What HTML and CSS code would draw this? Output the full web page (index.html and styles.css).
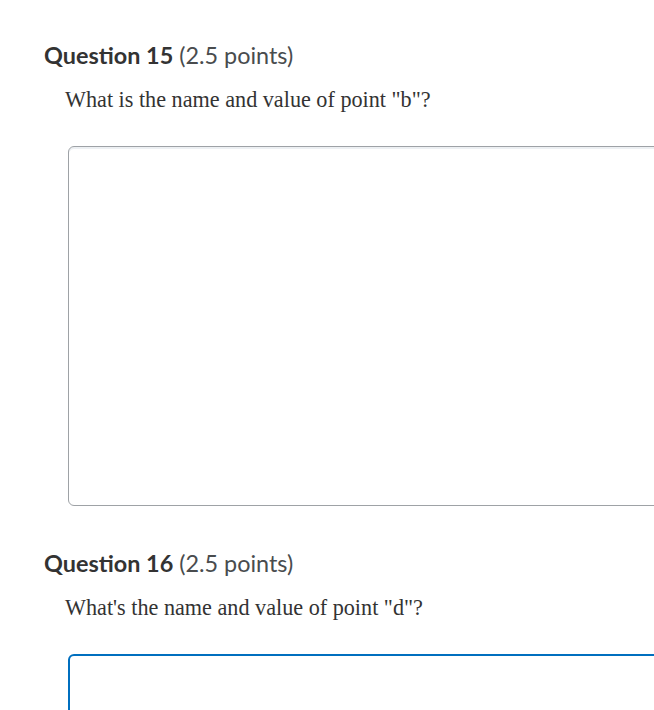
FILE: index.html
```html
<!DOCTYPE html>
<html>
<head>
<meta charset="utf-8">
<link rel="stylesheet" href="styles.css">
</head>
<body>
<div class="page">
  <section class="question">
    <h2 class="q-title"><strong>Question 15</strong> (2.5 points)</h2>
    <div class="q-body">
      <p class="q-text">What is the name and value of point "b"?</p>
      <div class="answer"></div>
    </div>
  </section>
  <section class="question">
    <h2 class="q-title"><strong>Question 16</strong> (2.5 points)</h2>
    <div class="q-body">
      <p class="q-text">What's the name and value of point "d"?</p>
      <div class="answer focused"></div>
    </div>
  </section>
</div>
</body>
</html>
```

FILE: styles.css
```css
html, body {
  margin: 0;
  padding: 0;
  background: #fff;
  overflow: hidden;
}
.page {
  width: 654px;
  height: 710px;
  overflow: hidden;
  padding: 40px 0 0 44px;
  box-sizing: border-box;
}
.question {
  margin-bottom: 42px;
}
.q-title {
  margin: 0;
  font-family: Lato, "Liberation Sans", sans-serif;
  font-size: 23.4px;
  font-weight: 400;
  color: #494c4e;
  line-height: 30px;
}
.q-title strong {
  font-weight: 700;
  color: #333;
}
.q-body {
  padding-left: 21px;
}
.q-text {
  margin: 16px 0 0;
  font-family: "Liberation Serif", serif;
  font-size: 22.2px;
  line-height: 28px;
  color: #333;
}
.answer {
  margin-top: 32px;
  margin-left: 3px;
  width: 700px;
  height: 360px;
  border: 1px solid #9ea2a6;
  border-radius: 6px;
  box-shadow: inset 0 2px 0 0 rgba(185, 194, 208, 0.25);
  box-sizing: border-box;
}
.answer.focused {
  border: 2px solid #006fbf;
  box-shadow: none;
}
```
